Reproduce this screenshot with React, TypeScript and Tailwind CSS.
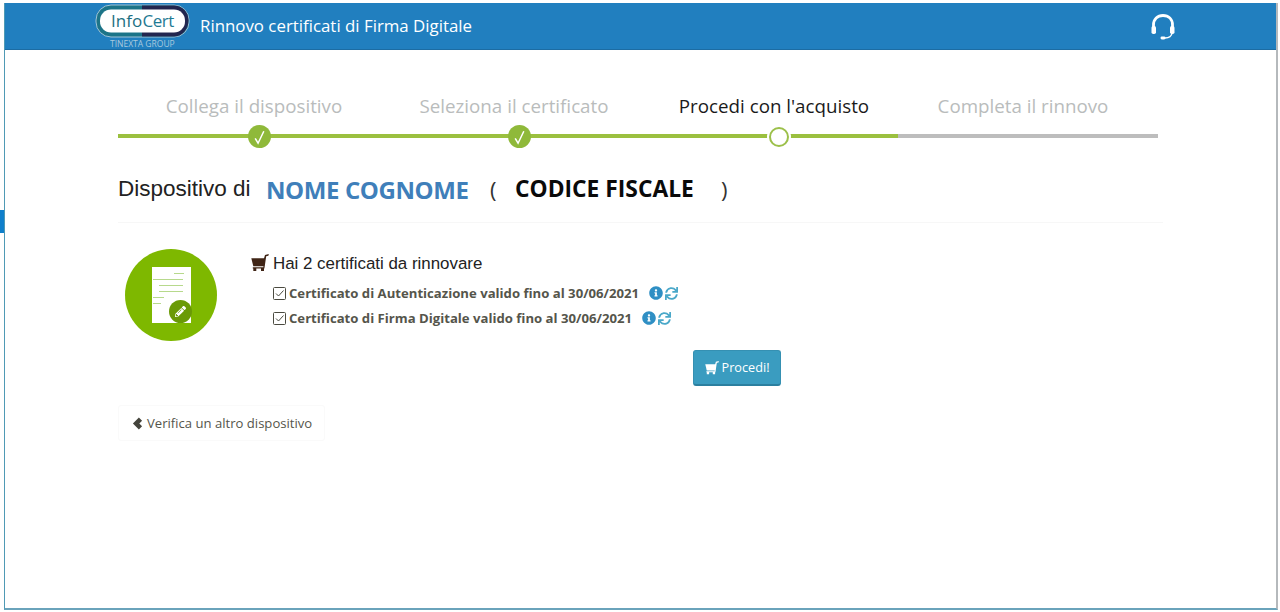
import React from "react";
import { FaInfoCircle, FaSync, FaPencilAlt } from "react-icons/fa";

const Cart = ({ className }: { className?: string }) => (
  <svg viewBox="0 0 18 18" className={className} fill="currentColor">
    <path d="M0.300 4.200H14L13 12.200H2.300Z" />
    <path d="M12.800 5L14 1L17.800 0L17.400 1.800L15.200 2.300L13.400 14.600H1.800V13.200H12.400Z" />
    <path d="M2.300 14H5.300V17H2.300ZM10 14H13V17H10Z" />
  </svg>
);

const Chevron = ({ className }: { className?: string }) => (
  <svg viewBox="0 0 12 14" className={className} fill="currentColor">
    <path d="M7.500 0.500L11 4L8 7L11 10L7.500 13.500L1 7Z" />
  </svg>
);

const Check = () => (
  <svg viewBox="0 0 24 24" className="w-6 h-6" fill="none" stroke="white" strokeWidth="1.600">
    <path d="M7.500 13.500L10.500 18.500L16.500 6" />
  </svg>
);

const CheckBox = () => (
  <svg viewBox="0 0 13 13" className="w-[13px] h-[13px] shrink-0" fill="none" stroke="#4a4a40" strokeWidth="1">
    <rect x="0.500" y="0.500" width="12" height="12" rx="1" />
    <path d="M3 6.500L5.500 9L10.500 3.500" />
  </svg>
);

const Headset = () => (
  <svg viewBox="0 0 26 28" className="w-[26px] h-[28px]" fill="none" stroke="white">
    <path d="M3.500 15V12C3.500 6 7.500 2.500 13 2.500C18.500 2.500 22.500 6 22.500 12V15" strokeWidth="2.800" />
    <rect x="1.500" y="13" width="4.500" height="8" rx="1.800" fill="white" stroke="none" />
    <rect x="20" y="13" width="4.500" height="8" rx="1.800" fill="white" stroke="none" />
    <path d="M22 20C21.500 23.500 19 25 15 25" strokeWidth="1.500" />
    <rect x="10.500" y="23.600" width="5" height="2.800" rx="1.400" fill="white" stroke="none" />
  </svg>
);

const Logo = () => (
  <svg viewBox="0 0 96 46" className="w-[96px] h-[46px] shrink-0">
    <rect x="1" y="2" width="93" height="32" rx="15" fill="#1c7488" stroke="#9fc3d6" strokeWidth="1" />
    <path d="M47 2.500H79C87 2.500 93.500 9 93.500 17.500C93.500 26 87 33.500 79 33.500H47Z" fill="#22264f" />
    <rect x="5" y="6.500" width="85" height="23" rx="11" fill="white" />
    <text x="16" y="24" fontSize="17" fontWeight="500" fill="#1c6f83" fontFamily="'Open Sans', sans-serif">Info</text>
    <text x="47.500" y="24" fontSize="17" fontWeight="500" fill="#1f7a94" letterSpacing="-0.500" fontFamily="'Open Sans', sans-serif">Cert</text>
    <text x="15" y="43.500" fontSize="8.500" fill="#a9c9dd" fontFamily="'Open Sans', sans-serif">TINEXTA GROUP</text>
  </svg>
);

const CertIcon = () => (
  <div className="w-[92px] h-[92px] rounded-full bg-[#7eb800] flex items-center justify-center relative shrink-0">
    <div className="w-[39px] h-[56px] bg-white flex flex-col gap-[5px] pt-[6px] px-[1px]">
      <div className="h-[1px] w-[10px] bg-[#b7d98c] self-end mr-[6px]" />
      <div className="h-[1px] w-[30px] bg-[#b7d98c]" />
      <div className="h-[1px] w-[24px] ml-[6px] bg-[#b7d98c]" />
      <div className="h-[1px] w-[24px] ml-[6px] bg-[#b7d98c]" />
      <div className="h-[1px] w-[11px] bg-[#b7d98c]" />
      <div className="h-[1px] w-[8px] bg-[#b7d98c]" />
    </div>
    <div className="absolute left-[44px] top-[51px] w-[23px] h-[23px] rounded-full bg-[#6a9a06] flex items-center justify-center">
      <FaPencilAlt className="text-white text-[11px]" />
    </div>
  </div>
);

const Step = ({ label, state, line, pad }: { label: string; state: "done" | "active" | "todo"; line: string; pad: string }) => (
  <div className="w-[260px]">
    <div className={`text-center text-[18.75px] leading-[24px] h-[40px] whitespace-nowrap ${pad} ${state === "active" ? "text-[#1a1a1a]" : "text-[#b9bcbc]"}`}>
      {label}
    </div>
    <div className={`h-[4px] relative ${line}`}>
      {state === "done" && (
        <div className="absolute left-[130px] top-[-9px] w-[23px] h-[23px] rounded-full bg-[#8fb93a] flex items-center justify-center">
          <Check />
        </div>
      )}
      {state === "active" && (
        <div className="absolute left-[131px] top-[-7px] w-[20px] h-[20px] rounded-full bg-white border-[2.5px] border-[#9cc04a] ring-2 ring-white" />
      )}
    </div>
  </div>
);

const Cert = ({ text }: { text: string }) => (
  <div className="flex items-center h-[25px] text-[13.15px] font-bold text-[#55554b]">
    <CheckBox />
    <span className="ml-[3px]">{text}</span>
    <FaInfoCircle className="ml-[10px] text-[#2f8fc4] text-[14px] -mt-[1px]" />
    <FaSync className="ml-[2px] text-[#4aa8c9] text-[13px] -mt-[1px]" />
  </div>
);

export default function App() {
  return (
    <div className="w-[1280px] h-[612px] bg-white pt-[3px] pl-[4px] pr-[2px] pb-[2px] relative overflow-hidden font-['Open_Sans',sans-serif]">
      <div className="absolute left-0 top-[210px] w-[4px] h-[23px] bg-[#0f7fcb]" />
      <div className="h-full border-l border-b-2 border-r-2 border-l-[#4f9ab5] border-b-[#6aa3bb] border-r-[#b5b9bc] flex flex-col">
        <header className="h-[47px] bg-[#217fbf] border-b border-[#1c6ca3] flex items-center shrink-0 pl-[90px] pr-[100px]">
          <Logo />
          <span className="ml-[9px] text-white text-[16.85px] leading-[24px]">Rinnovo certificati di Firma Digitale</span>
          <div className="ml-auto mt-[2px]"><Headset /></div>
        </header>

        <main className="pl-[113px] w-[1160px] pt-[44px]">
          <div className="flex w-[1040px]">
            <Step label="Collega il dispositivo" state="done" line="bg-[#9bc03f]" pad="pl-[12px]" />
            <Step label="Seleziona il certificato" state="done" line="bg-[#9bc03f]" pad="pl-[12px]" />
            <Step label="Procedi con l'acquisto" state="active" line="bg-[#9bc03f]" pad="pl-[12px]" />
            <Step label="Completa il rinnovo" state="todo" line="bg-[#bdbdbd]" pad="pr-[10px]" />
          </div>

          <div className="w-[1045px] h-[85px] border-b border-[#f7f7f7] flex items-center pt-[19px]">
            <span className="font-['Liberation_Sans',sans-serif] text-[22.5px] text-[#222] w-[148px] -mt-[2px]">Dispositivo di</span>
            <span className="font-bold text-[24px] text-[#3f7fba] w-[224px] tracking-[-0.4px]">NOME COGNOME</span>
            <span className="text-[22px] text-[#333] w-[25px]">(</span>
            <span className="font-bold text-[22.8px] text-[#0a0a0a] w-[206px]">CODICE FISCALE</span>
            <span className="text-[22px] text-[#333]">)</span>
          </div>

          <div className="flex mt-[26px] pl-[7px]">
            <CertIcon />
            <div className="ml-[34px] pt-[4px]">
              <div className="flex items-center h-[22px] text-[16.9px] text-[#222] font-['Liberation_Sans',sans-serif]">
                <Cart className="w-[18px] h-[18px] text-[#3f2415] -mt-[3px]" />
                <span className="ml-[4px]">Hai 2 certificati da rinnovare</span>
              </div>
              <div className="ml-[22px] mt-[6px]">
                <Cert text="Certificato di Autenticazione valido fino al 30/06/2021" />
                <Cert text="Certificato di Firma Digitale valido fino al 30/06/2021" />
              </div>
            </div>
          </div>

          <div className="pl-[575px] mt-[9px]">
            <button className="w-[88px] h-[36px] rounded-[3px] bg-[#3a9cc0] border border-[#3590b2] border-b-2 border-b-[#2b7f9f] text-white text-[12.7px] flex items-center justify-center gap-[3px] pt-[1px]">
              <Cart className="w-[14px] h-[14px] text-white" />
              Procedi!
            </button>
          </div>

          <div className="mt-[19px]">
            <button className="w-[207px] h-[36px] border border-[#fafafa] rounded-[3px] text-[13.1px] text-[#55554b] flex items-center pl-[13px] pt-[1px]">
              <Chevron className="w-[11px] h-[13px] text-[#44443c] mr-[4px]" />
              Verifica un altro dispositivo
            </button>
          </div>
        </main>
      </div>
    </div>
  );
}
